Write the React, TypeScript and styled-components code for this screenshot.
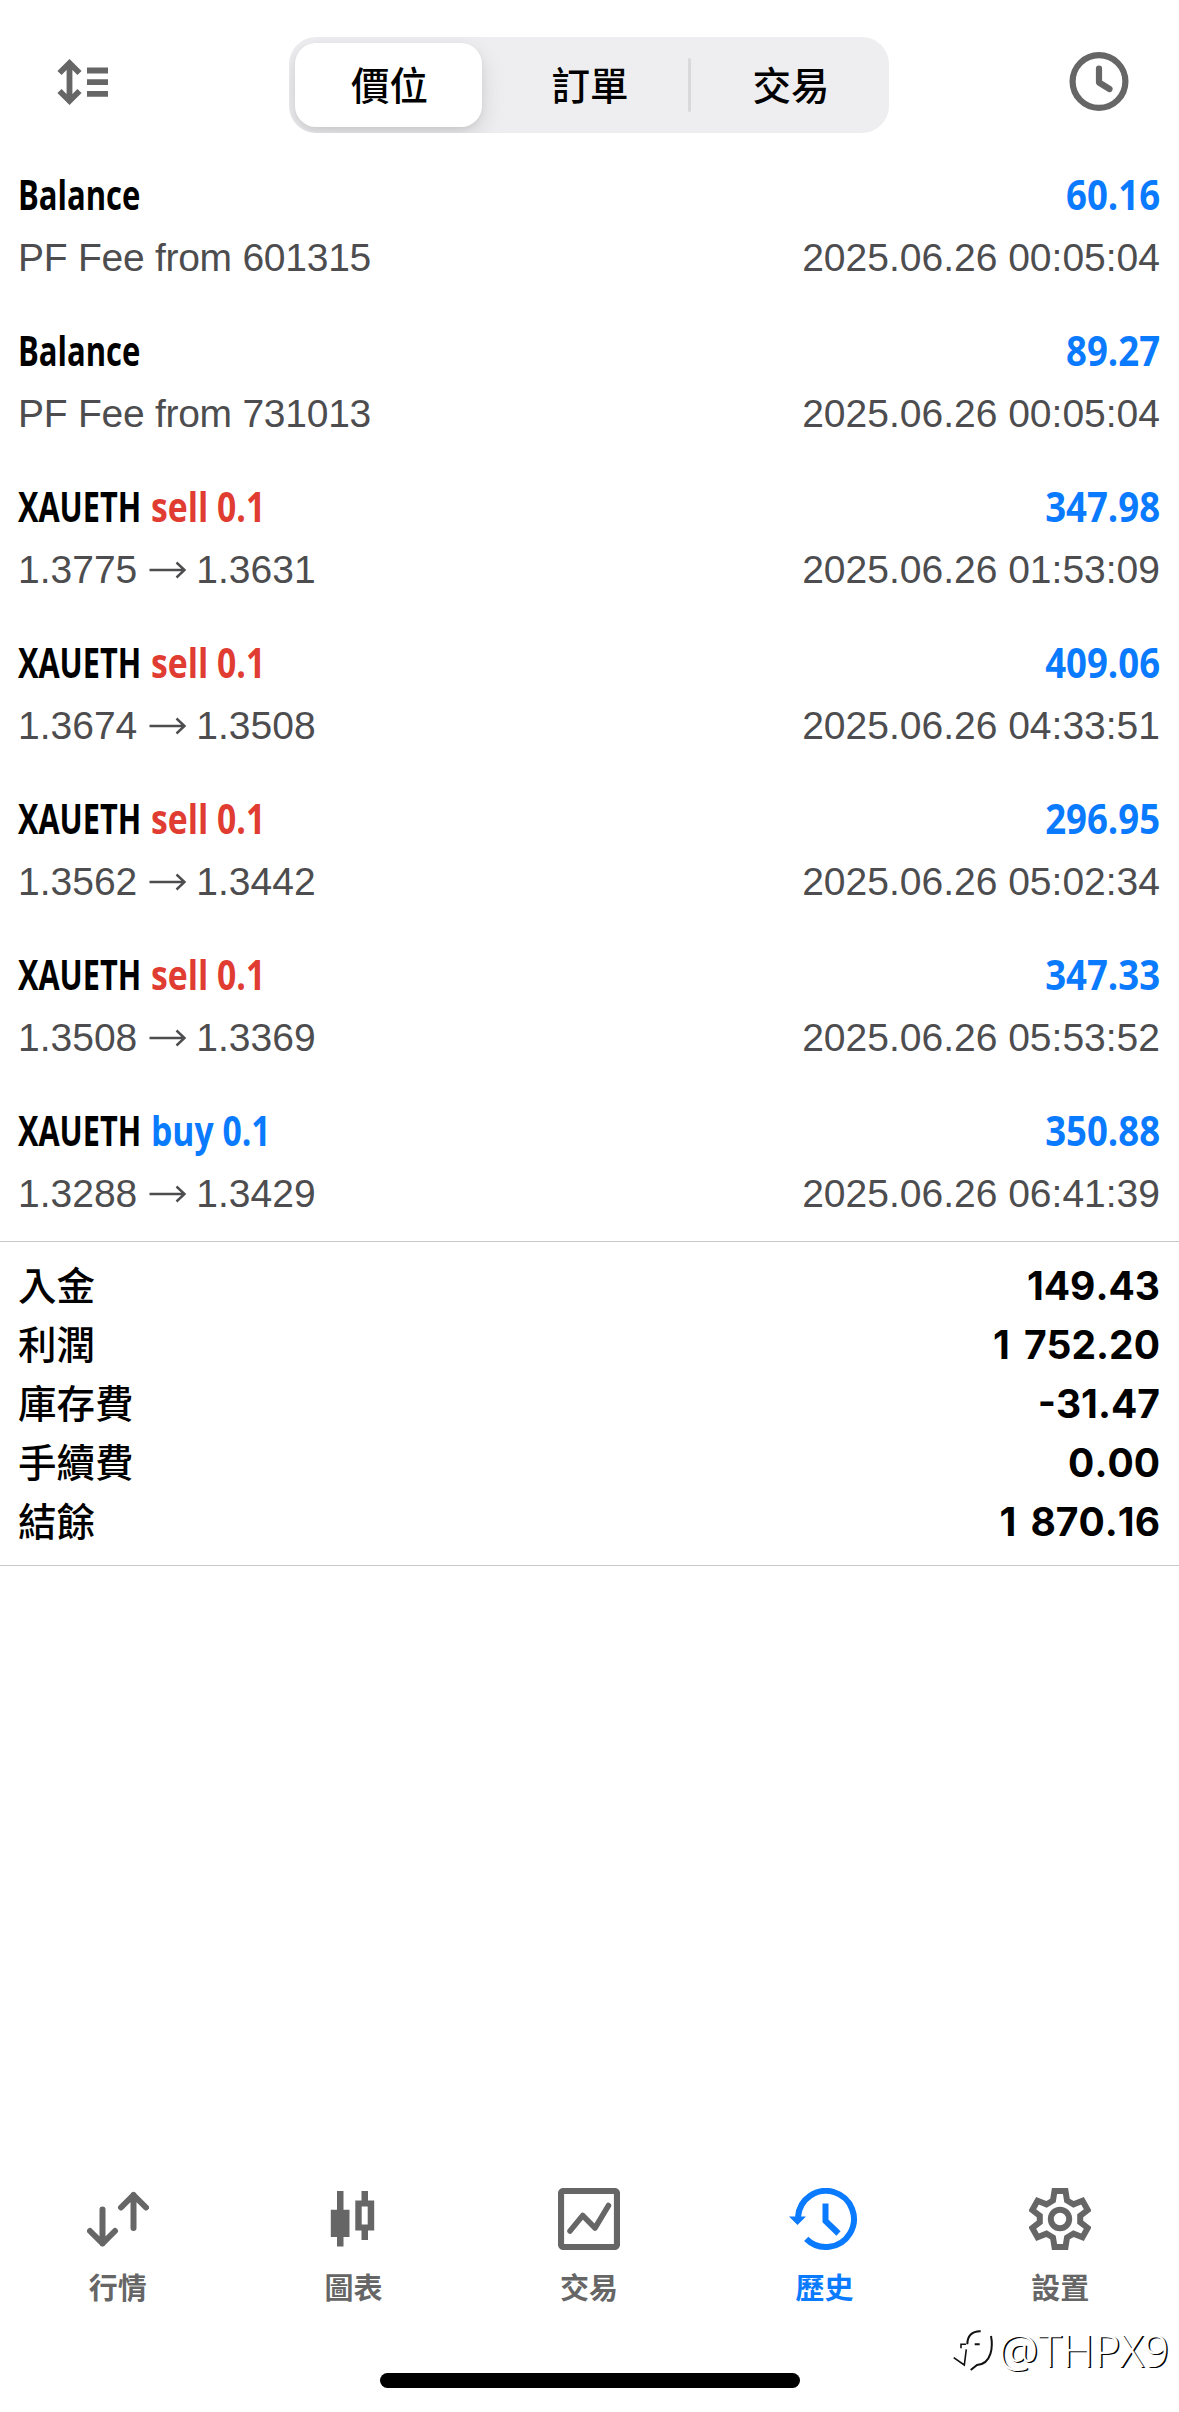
import type { ReactNode } from "react";
import styled, { createGlobalStyle } from "styled-components";

interface Deal {
  symbol: string;
  side?: "sell" | "buy";
  volume?: string;
  from?: string;
  to?: string;
  comment?: string;
  profit: string;
  time: string;
}

const deals: Deal[] = [
  { symbol: "Balance", comment: "PF Fee from 601315", profit: "60.16", time: "2025.06.26 00:05:04" },
  { symbol: "Balance", comment: "PF Fee from 731013", profit: "89.27", time: "2025.06.26 00:05:04" },
  { symbol: "XAUETH", side: "sell", volume: "0.1", from: "1.3775", to: "1.3631", profit: "347.98", time: "2025.06.26 01:53:09" },
  { symbol: "XAUETH", side: "sell", volume: "0.1", from: "1.3674", to: "1.3508", profit: "409.06", time: "2025.06.26 04:33:51" },
  { symbol: "XAUETH", side: "sell", volume: "0.1", from: "1.3562", to: "1.3442", profit: "296.95", time: "2025.06.26 05:02:34" },
  { symbol: "XAUETH", side: "sell", volume: "0.1", from: "1.3508", to: "1.3369", profit: "347.33", time: "2025.06.26 05:53:52" },
  { symbol: "XAUETH", side: "buy", volume: "0.1", from: "1.3288", to: "1.3429", profit: "350.88", time: "2025.06.26 06:41:39" },
];

const totals = [
  { label: "入金", value: "149.43" },
  { label: "利潤", value: "1 752.20" },
  { label: "庫存費", value: "-31.47" },
  { label: "手續費", value: "0.00" },
  { label: "結餘", value: "1 870.16" },
];

const SortIcon = () => (
  <svg width="52" height="48" viewBox="0 0 52 48" fill="none" stroke="#666" strokeWidth="5.8">
    <path d="M12.5 4v40M2.5 15l10-10 10 10M2.5 33l10 10 10-10" />
    <path d="M30 12.5h21M30 24.2h21M30 35.8h21" />
  </svg>
);

const ClockIcon = () => (
  <svg width="60" height="60" viewBox="0 0 60 60" fill="none" stroke="#666" strokeWidth="6.2" strokeLinecap="round" strokeLinejoin="round">
    <circle cx="30" cy="29.5" r="26.4" />
    <path d="M30 16.500v14l10.500 6.500" />
  </svg>
);

const Arrow = () => (
  <svg width="38" height="18" viewBox="0 0 38 18" fill="none" stroke="#4d4d4f" strokeWidth="2.4">
    <path d="M0.5 9h35M27.5 1.5l8 7.5-8 7.5" />
  </svg>
);

const QuotesIcon = () => (
  <svg width="62" height="62" viewBox="0 0 62 62" fill="none" stroke="#666" strokeWidth="6" strokeLinecap="round" strokeLinejoin="round">
    <path d="M15.5 21.5v34M3 43l12.5 12.5 12.5-12.5" />
    <path d="M46.5 40v-33M34 19.5l12.5-12.5 12.5 12.5" />
  </svg>
);

const ChartIcon = () => (
  <svg width="62" height="62" viewBox="0 0 62 62" fill="#666">
    <path d="M15 3h6.500v18.700h6v27.300h-6v9.500h-6.500v-9.500h-6.200v-27.300h6.200z" />
    <path fillRule="evenodd" d="M39.500 3h6.500v9.500h6.200v30h-6.200v9.500h-6.500v-9.500h-6.200v-30h6.200zM39.700 18.500v18h6v-18z" />
  </svg>
);

const TradeIcon = () => (
  <svg width="62" height="62" viewBox="0 0 62 62" fill="none" stroke="#666" strokeLinejoin="round">
    <rect x="3" y="3" width="56" height="56" rx="2.5" strokeWidth="6.2" />
    <path d="M12 43l12.7-15.500 12.3 12.500 13.500-22.500" strokeWidth="5.5" strokeLinecap="round" />
  </svg>
);

const HistoryIcon = () => (
  <svg width="72" height="62" viewBox="0 0 72 62" fill="none" stroke="#0a7aff" strokeWidth="6">
    <path d="M9 29a28 28 0 1 1 8.200 21.800" />
    <path d="M36.500 15.500v17.500l13 12.500" />
    <path d="M0 28.500h17l-8.500 8.500z" fill="#0a7aff" stroke="none" />
  </svg>
);

const SettingsIcon = () => (
  <svg width="62" height="62" viewBox="0 0 62 62" fill="none" stroke="#666" strokeWidth="6">
    <path d="M25.500 3h11l1.500 9.500 6.500 3.800 9-3.600 5.200 9.300-7.500 5.800v6.400l7.500 5.800-5.200 9.300-9-3.600-6.500 3.800-1.500 9.500h-11l-1.500-9.500-6.500-3.800-9 3.600-5.200-9.300 7.500-5.800v-6.400l-7.500-5.800 5.200-9.300 9 3.600 6.500-3.800z" />
    <circle cx="31" cy="31" r="9.200" />
  </svg>
);

const WatermarkLogo = () => (
  <svg width="44" height="48" viewBox="0 0 44 48" fill="none" stroke="#111" strokeWidth="1.6">
    <path d="M1.700 31.700l10.600 7.300 2-15.700M9 22.300v-4h5" />
    <path d="M15.300 18.300c0-8.300 4.700-13.300 13.400-13M22.700 18.300h5" strokeWidth="2" />
    <path d="M39 10c2 10 1 28-14 29l-6.300 5" strokeWidth="2" />
  </svg>
);

const tabs: { label: string; icon: ReactNode; active?: boolean }[] = [
  { label: "行情", icon: <QuotesIcon /> },
  { label: "圖表", icon: <ChartIcon /> },
  { label: "交易", icon: <TradeIcon /> },
  { label: "歷史", icon: <HistoryIcon />, active: true },
  { label: "設置", icon: <SettingsIcon /> },
];

export default function App() {
  return (
    <Screen>
      <GlobalStyle />
      <Header>
        <IconButton>
          <SortIcon />
        </IconButton>
        <Segments>
          <ActiveSegment>價位</ActiveSegment>
          <Segment>訂單</Segment>
          <Divider />
          <Segment>交易</Segment>
        </Segments>
        <IconButton>
          <ClockIcon />
        </IconButton>
      </Header>

      <List>
        {deals.map((deal, i) => (
          <Row key={i}>
            <Line>
              <Title>
                <Symbol $scale={deal.side ? 0.73 : 0.738}>{deal.symbol}</Symbol>
                {deal.side && (
                  <Side $side={deal.side}>
                    {deal.side} {deal.volume}
                  </Side>
                )}
              </Title>
              <Profit>{deal.profit}</Profit>
            </Line>
            <Detail>
              {deal.comment ? (
                <Comment>{deal.comment}</Comment>
              ) : (
                <Prices>
                  {deal.from}
                  <Arrow />
                  {deal.to}
                </Prices>
              )}
              <span>{deal.time}</span>
            </Detail>
          </Row>
        ))}
      </List>

      <Summary>
        {totals.map(({ label, value }) => (
          <Total key={label}>
            <dt>{label}</dt>
            <dd>{value}</dd>
          </Total>
        ))}
      </Summary>

      <TabBar>
        {tabs.map(({ label, icon, active }) => (
          <Tab key={label} $active={active}>
            {icon}
            {label}
          </Tab>
        ))}
      </TabBar>
      <HomeIndicator />

      <Watermark>
        <WatermarkLogo />
        @THPX9
      </Watermark>
    </Screen>
  );
}

const GlobalStyle = createGlobalStyle`
  * {
    box-sizing: border-box;
    margin: 0;
    padding: 0;
  }
  body {
    background: #fff;
  }
  svg {
    flex-shrink: 0;
  }
`;

const Screen = styled.div`
  position: relative;
  display: flex;
  flex-direction: column;
  width: 1179px;
  height: 2412px;
  overflow: hidden;
  background: #fff;
  color: #000;
  font-family: "Liberation Sans", "Noto Sans CJK TC", sans-serif;
`;

const Header = styled.header`
  display: flex;
  justify-content: space-between;
  align-items: flex-start;
  height: 149px;
  padding: 37px 50px 0 57px;
`;

const IconButton = styled.button`
  display: flex;
  align-items: center;
  height: 89px;
  border: 0;
  background: none;
`;

const Segments = styled.div`
  display: flex;
  align-items: center;
  width: 600px;
  height: 96px;
  padding-left: 6px;
  border-radius: 27px;
  background: #eeeef0;
  overflow: hidden;
`;

const Segment = styled.button`
  flex: 1;
  height: 84px;
  padding: 0 0 4px 2px;
  border: 0;
  border-radius: 21px;
  background: transparent;
  font-family: "Noto Sans CJK TC", sans-serif;
  font-size: 38.5px;
  font-weight: 500;
  color: #000;
`;

const ActiveSegment = styled(Segment)`
  flex: 0 0 187px;
  margin-right: 8px;
  background: #fff;
  box-shadow: 0 9px 24px rgba(0, 0, 0, 0.12), 0 3px 6px rgba(0, 0, 0, 0.06);
`;

const Divider = styled.i`
  width: 3px;
  height: 54px;
  border-radius: 2px;
  background: #d9d9db;
`;

const List = styled.ul`
  list-style: none;
`;

const Row = styled.li`
  height: 156px;
  padding: 17px 19px 0 18px;
`;

const Line = styled.div`
  display: flex;
  justify-content: space-between;
  height: 61px;
  font-family: "Open Sans", sans-serif;
  font-size: 42px;
  font-weight: 700;
  line-height: 56px;
  white-space: nowrap;
`;

const Title = styled.h2`
  display: flex;
  font-size: inherit;
`;

/* The names are set narrower than the face itself */
const Symbol = styled.span<{ $scale: number }>`
  width: 133px;
  transform: scaleX(${(props) => props.$scale});
  transform-origin: left;
`;

const Side = styled.span<{ $side: "sell" | "buy" }>`
  color: ${(props) => (props.$side === "sell" ? "#e03c31" : "#0a7aff")};
  transform: scaleX(0.803);
  transform-origin: left;
`;

const Profit = styled.span`
  color: #0a7aff;
  transform: scaleX(0.87);
  transform-origin: right;
`;

const Detail = styled.div`
  display: flex;
  justify-content: space-between;
  height: 62px;
  font-size: 39px;
  line-height: 62px;
  color: #4d4d4f;
`;

const Comment = styled.span`
  letter-spacing: -0.26px;
`;

const Prices = styled.span`
  display: flex;
  align-items: center;

  svg {
    margin: 0 9px 0 12px;
  }
`;

const Summary = styled.dl`
  padding: 14px 19px 14px 18px;
  border-top: 1px solid #c8c8ca;
  border-bottom: 1px solid #c8c8ca;
`;

const Total = styled.div`
  display: flex;
  justify-content: space-between;
  height: 59px;
  line-height: 59px;

  dt {
    font-family: "Noto Sans CJK TC", sans-serif;
    font-size: 38.5px;
    font-weight: 500;
    line-height: 54px;
  }
  dd {
    font-family: Inter, sans-serif;
    font-size: 39px;
    font-weight: 700;
    font-kerning: none;
    word-spacing: 5px;
  }
`;

const TabBar = styled.nav`
  display: flex;
  margin-top: auto;
  padding-right: 1px;
`;

const Tab = styled.a<{ $active?: boolean }>`
  flex: 1;
  display: flex;
  flex-direction: column;
  align-items: center;
  gap: 14px;
  font-family: "Noto Sans CJK TC", sans-serif;
  font-size: 29px;
  font-weight: ${(props) => (props.$active ? 700 : 600)};
  line-height: 44px;
  color: ${(props) => (props.$active ? "#0a7aff" : "#666")};
`;

const HomeIndicator = styled.div`
  width: 420px;
  height: 15px;
  margin: 65px auto 24px;
  border-radius: 8px;
  background: #000;
`;

const Watermark = styled.div`
  position: absolute;
  right: 10px;
  bottom: 37px;
  display: flex;
  align-items: center;
  gap: 2px;
  font-family: "Noto Sans", sans-serif;
  font-size: 44.5px;
  font-weight: 300;
  line-height: 50px;
  color: #fff;
  text-shadow: 1.5px 1px 0 #000;
`;
